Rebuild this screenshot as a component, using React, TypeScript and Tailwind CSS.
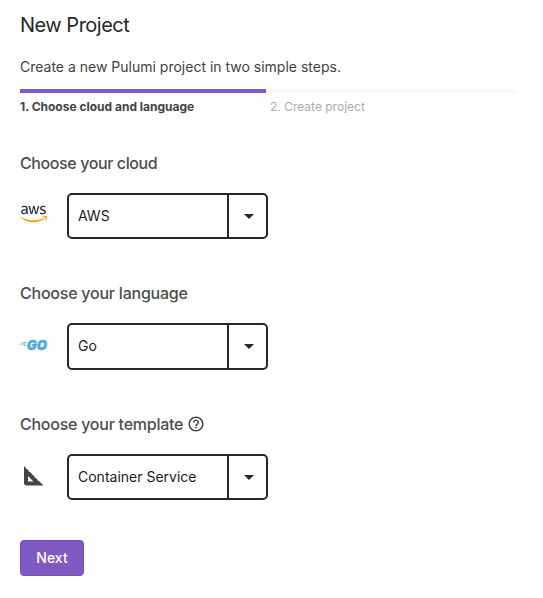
import type { ReactNode } from "react";
import { FaAws } from "react-icons/fa6";
import { MdArrowDropDown, MdHelpOutline } from "react-icons/md";

function AwsLogo() {
  return (
    <>
      <svg width="0" height="0" className="absolute">
        <defs>
          <linearGradient id="awsFill" x1="0" y1="0" x2="0" y2="1">
            <stop offset="0.63" stopColor="#252f3e" />
            <stop offset="0.63" stopColor="#f90" />
          </linearGradient>
        </defs>
      </svg>
      <FaAws className="mb-[5px] h-[22px] w-[27px]" preserveAspectRatio="none" fill="url(#awsFill)" />
    </>
  );
}

function GoLogo() {
  return (
    <svg viewBox="0 -5 30 22" className="mb-[3px] h-[22px] w-[30px] text-[#4bacd8]" fill="currentColor">
      <path d="M2.6 3H7.2L6.6 4H2.2ZM0 4.6H6.3L5.9 5.5H0ZM3.6 6.1H5.8L5.6 6.9H3.4Z" opacity="0.75" />
      <text
        x="6.8"
        y="10.7"
        fontSize="13.5"
        fontWeight="900"
        fontStyle="italic"
        textLength="20.2"
        lengthAdjust="spacingAndGlyphs"
        stroke="currentColor"
        strokeWidth="0.4"
      >
        GO
      </text>
    </svg>
  );
}

function SetSquare() {
  return (
    <svg viewBox="0 0 20 20" className="mb-[2px] ml-1 h-5 w-5" fill="#444">
      <path
        fillRule="evenodd"
        d="M0 0 2.3 2.3 1.8 2.8 2.3 3.3 2.8 2.8 5.2 5.2 4.7 5.7 5.2 6.2 5.7 5.7 8.1 8.1 7.6 8.6 8.1 9.1 8.6 8.6 11 11 10.5 11.5 11 12 11.5 11.5 13.9 13.9 13.4 14.4 13.9 14.9 14.4 14.4 19.5 19.5H2.2C1 19.5 0 18.5 0 17.3ZM4 10V15.5H9.5Z"
      />
    </svg>
  );
}

function Select({ value }: { value: string }) {
  return (
    <button className="flex h-full w-[201px] items-stretch rounded-[5px] border-2 border-[#272727] bg-white text-left text-[14px] text-[#1b1b1b]">
      <span className="flex flex-1 items-center pb-[2px] pl-[9px]">{value}</span>
      <span className="flex w-[39px] items-center justify-center border-l-2 border-[#272727] pb-px pl-[2px]">
        <MdArrowDropDown className="size-6 text-[#272727]" />
      </span>
    </button>
  );
}

function Field({ label, labelClass, icon, value, rowClass, help }: {
  label: string;
  labelClass: string;
  icon: ReactNode;
  value: string;
  rowClass: string;
  help?: boolean;
}) {
  return (
    <section>
      <h2 className="flex h-6 items-center text-[16px] font-medium text-[#4d4d4d]">
        <span className={labelClass}>{label}</span>
        {help && <MdHelpOutline className="ml-1 size-[18px] shrink-0 text-[#444]" />}
      </h2>
      <div className={`mt-[18px] flex items-center ${rowClass}`}>
        <div className="flex w-[47px] shrink-0 items-center">{icon}</div>
        <Select value={value} />
      </div>
    </section>
  );
}

export default function App() {
  return (
    <main className="h-[598px] w-[543px] overflow-hidden bg-white px-5 pt-[10px] font-['Inter',sans-serif] text-[#424242]">
      <h1 className="h-[30px] text-[20px] leading-[30px] tracking-[-0.5px] text-[#272727]">New Project</h1>
      <p className="mt-[17px] h-5 text-[14px] leading-5">Create a new Pulumi project in two simple steps.</p>
      <div className="mt-3 flex gap-1 text-[12px] leading-5">
        <div className="w-[246px] border-t-4 border-[#805ac3] pt-1 font-bold">1. Choose cloud and language</div>
        <div className="w-[246px] border-t-4 border-[#f9f9f9] pt-1 text-[#aaa]">2. Create project</div>
      </div>
      <div className="mt-[34px] flex flex-col gap-[42px]">
        <Field label="Choose your cloud" labelClass="tracking-[-0.4px]" icon={<AwsLogo />} value="AWS" rowClass="h-[46px]" />
        <Field label="Choose your language" labelClass="tracking-[-0.23px]" icon={<GoLogo />} value="Go" rowClass="h-[47px]" />
        <Field
          label="Choose your template"
          labelClass="tracking-[-0.25px]"
          icon={<SetSquare />}
          value="Container Service"
          rowClass="h-[46px]"
          help
        />
      </div>
      <button className="mt-10 h-9 w-16 rounded-[4px] border border-[#7350b0] bg-[#805ac3] pb-px text-[14px] font-medium text-white">Next</button>
    </main>
  );
}
